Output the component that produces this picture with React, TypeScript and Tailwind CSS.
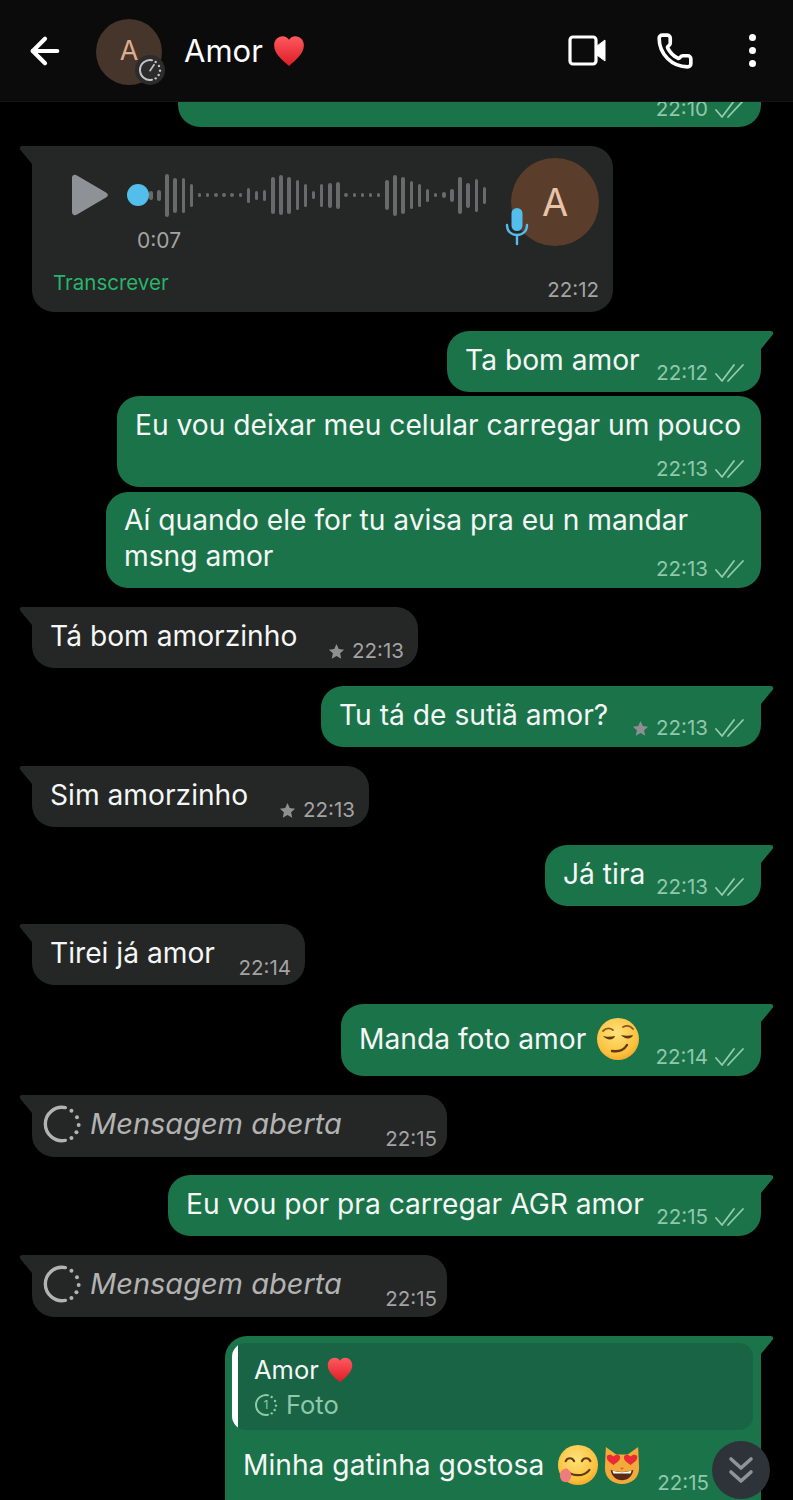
import type { ReactNode } from "react";
import { ArrowLeft, Phone } from "lucide-react";

const waveBars = [
  9, 11, 43, 35, 35, 23, 4, 4, 4, 4, 4, 4, 15, 9, 11, 37, 40, 37, 30, 23, 8, 23,
  25, 27, 4, 4, 4, 4, 4, 30, 41, 37, 28, 23, 13, 4, 6, 13, 37, 25, 33, 17,
];

function Heart({ size = 34 }: { size?: number }) {
  return (
    <svg width={size} height={size} viewBox="0 0 32 32">
      <defs>
        <linearGradient id="heart" x1="0" y1="0" x2="0" y2="1">
          <stop offset="0" stopColor="#ff5a5f" />
          <stop offset="1" stopColor="#dd1c26" />
        </linearGradient>
      </defs>
      <path
        d="M16 30C9 24 2 18 2 10.500C2 5.500 5.800 2 10 2c2.700 0 4.800 1.300 6 3.500C17.200 3.300 19.300 2 22 2c4.200 0 8 3.500 8 8.500C30 18 23 24 16 30Z"
        fill="url(#heart)"
      />
    </svg>
  );
}

function FaceBase({ id }: { id: string }) {
  return (
    <>
      <defs>
        <radialGradient id={id} cx="0.45" cy="0.35" r="0.75">
          <stop offset="0" stopColor="#ffe27a" />
          <stop offset="0.7" stopColor="#fbc03c" />
          <stop offset="1" stopColor="#ee9a1e" />
        </radialGradient>
      </defs>
      <circle cx="22" cy="22" r="21" fill={`url(#${id})`} />
    </>
  );
}

function Smirk() {
  return (
    <svg width="44" height="44" viewBox="0 0 44 44">
      <FaceBase id="smirk" />
      <path d="M7 14c3-3 7-3 10-1M27 10c4-2 8-1 10 2" stroke="#8a5a1c" strokeWidth="1.800" fill="none" strokeLinecap="round" />
      <path d="M7 19c3 1 8 1 12 0-1 4-8 5-12 0ZM25 18c4 1 8 1 12 0-1 4-8 5-12 0Z" fill="#5b3a14" />
      <path d="M16 34c6 1 12-1 15-6" stroke="#5b3a14" strokeWidth="2.400" fill="none" strokeLinecap="round" />
    </svg>
  );
}

function Yum() {
  return (
    <svg width="42" height="42" viewBox="0 0 44 44">
      <FaceBase id="yum" />
      <path d="M9 18c2-4 7-4 9 0M26 18c2-4 7-4 9 0" stroke="#5b3a14" strokeWidth="2.200" fill="none" strokeLinecap="round" />
      <path d="M10 27c4 7 18 8 24 0" stroke="#5b3a14" strokeWidth="2.200" fill="none" strokeLinecap="round" />
      <ellipse cx="9" cy="33" rx="6" ry="7" fill="#ef7c7c" />
    </svg>
  );
}

function CatEyes() {
  return (
    <svg width="38" height="42" viewBox="0 0 40 44">
      <path d="M3 3l11 8h12l11-8 1 22c0 11-8 17-18 17S2 36 2 25Z" fill="#f3aa3a" />
      <path d="M4 12c-2 2 4 3 5-1M36 12c2 2-4 3-5-1" fill="#d9882a" />
      <path d="M11 22c-4-3-7-5-7-8 0-3 4-4 7-1 3-3 7-2 7 1 0 3-3 5-7 8ZM29 22c-4-3-7-5-7-8 0-3 4-4 7-1 3-3 7-2 7 1 0 3-3 5-7 8Z" fill="#ea2b36" />
      <path d="M8 27c6 3 18 3 24 0-1 7-6 11-12 11S9 34 8 27Z" fill="#5a2a18" />
      <path d="M10 28c6 2 14 2 20 0l-1 3H11Z" fill="#fff" />
      <path d="M18 25h4l-2 2Z" fill="#c25a3a" />
    </svg>
  );
}

function Ticks() {
  return (
    <svg width="30" height="20" viewBox="0 0 30 20" className="text-[#93cbad]" fill="none" stroke="currentColor" strokeWidth="1.800" strokeLinecap="round" strokeLinejoin="round">
      <path d="M1 11l6 7L19 2" />
      <path d="M13 18L28 2" />
    </svg>
  );
}

function Star() {
  return (
    <svg width="17" height="17" viewBox="0 0 24 24" fill="currentColor" className="text-[#8f8f8f]">
      <path d="M12 1.500l3.200 7.100 7.600.800-5.700 5.100 1.600 7.600L12 18.300l-6.700 3.800 1.600-7.600L1.200 9.400l7.600-.800Z" />
    </svg>
  );
}

function Meta({ time, star, sent, hideTicks }: { time: string; star?: boolean; sent?: boolean; hideTicks?: boolean }) {
  return (
    <div className={`flex shrink-0 items-center gap-[7px] text-[20.500px] leading-[24px] ${sent ? "text-[#8fc8aa]" : "text-[#a3a3a3]"}`}>
      {star && <Star />}
      <span>{time}</span>
      {sent && !hideTicks && <Ticks />}
    </div>
  );
}

function Bubble({ side, tail, className, children }: { side: "in" | "out"; tail?: boolean; className: string; children: ReactNode }) {
  const isOut = side === "out";
  const corner = tail ? (isOut ? "rounded-tr-none" : "rounded-tl-none") : "";
  return (
    <div className={`relative shrink-0 rounded-[22px] ${corner} ${isOut ? "self-end bg-[#1b734a]" : "self-start bg-[#252626]"} ${className}`}>
      {tail && isOut && (
        <svg width="16" height="20" viewBox="0 0 16 20" className="absolute -right-[14px] top-0 text-[#1b734a]" fill="currentColor">
          <path d="M0 0h11.500c2.500 0 3.500 2 2 4L2 18v2H0Z" />
        </svg>
      )}
      {tail && !isOut && (
        <svg width="16" height="20" viewBox="0 0 16 20" className="absolute -left-[14px] top-0 text-[#252626]" fill="currentColor">
          <path d="M16 0H4.500C2 0 1 2 2.500 4L14 18v2h2Z" />
        </svg>
      )}
      {children}
    </div>
  );
}

function TimerRing({ size, className, children }: { size: number; className: string; children?: ReactNode }) {
  return (
    <svg width={size} height={size} viewBox="0 0 36 36" fill="none" stroke="currentColor" className={className} strokeLinecap="round">
      <path d="M21 3.300A15 15 0 1 0 21 32.700" strokeWidth="3" />
      <g fill="currentColor" stroke="none">
        <circle cx="26.500" cy="6" r="1.800" />
        <circle cx="31.500" cy="12" r="1.800" />
        <circle cx="33" cy="19" r="1.800" />
        <circle cx="31" cy="25.500" r="1.800" />
        <circle cx="26.500" cy="30.500" r="1.800" />
      </g>
      {children}
    </svg>
  );
}

function SimpleMessage({ side, text, time, star, className }: { side: "in" | "out"; text: string; time: string; star?: boolean; className: string }) {
  const isOut = side === "out";
  return (
    <Bubble side={side} tail className={`flex h-[61px] justify-between ${isOut ? "pl-[18px] pr-[16px]" : "pl-[18px] pr-[14px]"} ${className}`}>
      <p className="whitespace-nowrap pt-[10px] text-[28.200px] leading-[38px] text-[#f4f7f5]">{text}</p>
      <div className={`self-end ${isOut ? "pb-[7px]" : "pb-[5px]"}`}>
        <Meta time={time} star={star} sent={isOut} />
      </div>
    </Bubble>
  );
}

function OpenedMessage({ className }: { className: string }) {
  return (
    <Bubble side="in" tail className={`flex h-[62px] w-[415px] justify-between pl-[10px] pr-[10px] ${className}`}>
      <div className="flex items-center gap-[8px] pb-[4px] text-[#b3b3b3]">
        <TimerRing size={40} className="text-[#b3b3b3]" />
        <span className="whitespace-nowrap text-[29px] italic leading-[38px]">Mensagem aberta</span>
      </div>
      <div className="self-end pb-[6px]">
        <Meta time="22:15" />
      </div>
    </Bubble>
  );
}

function VoiceNote() {
  return (
    <Bubble side="in" tail className="mt-[19px] flex h-[166px] w-[581px] flex-col pl-[21px] pr-[14px] pt-[12px]">
      <div className="flex items-start">
        <svg width="38" height="42" viewBox="0 0 38 42" className="ml-[18px] mt-[16px] shrink-0 text-[#8e9296]" fill="currentColor">
          <path d="M1 4c0-3 2.500-4 5-2.500l29 17c2.500 1.500 2.500 3.500 0 5l-29 17C3.500 42 1 41 1 38Z" />
        </svg>
        <div className="ml-[18px] mt-[12px] flex flex-col">
          <div className="relative flex h-[50px] items-center pl-[22px]">
            <span className="absolute left-0 top-[14px] h-[22px] w-[22px] rounded-full bg-[#53bdeb]" />
            <div className="flex items-center gap-[4.650px]">
              {waveBars.map((h, i) => (
                <span key={i} className="w-[3.500px] rounded-full bg-[#686a6b]" style={{ height: h }} />
              ))}
            </div>
          </div>
          <span className="ml-[10px] mt-[7px] text-[21px] leading-[28px] text-[#a3a3a3]">0:07</span>
        </div>
        <div className="relative ml-auto flex h-[88px] w-[88px] shrink-0 items-center justify-center rounded-full bg-[#5a3e2b] text-[38px] text-[#e8c4a8]">
          A
          <svg width="26" height="40" viewBox="0 0 26 40" className="absolute -left-[7px] top-[48px] text-[#53bdeb]" fill="none" stroke="currentColor" strokeWidth="2.400" strokeLinecap="round">
            <rect x="7.500" y="2" width="11" height="23" rx="5.500" fill="currentColor" stroke="none" />
            <path d="M3 19c0 6 4 10 10 10s10-4 10-10M13 29v9" />
          </svg>
        </div>
      </div>
      <div className="mt-auto flex items-end justify-between pb-[10px]">
        <span className="mb-[5px] text-[20.500px] leading-[28px] text-[#27b56b]">Transcrever</span>
        <Meta time="22:12" />
      </div>
    </Bubble>
  );
}

export default function App() {
  return (
    <div className="relative flex h-[1500px] w-[793px] flex-col overflow-hidden bg-black font-[family-name:Inter,sans-serif]">
      {/* Header */}
      <header className="flex h-[102px] shrink-0 items-center border-b border-[#151515] bg-[#0b0b0b] pl-[24px] pr-[37px] text-white">
        <ArrowLeft size={42} strokeWidth={2.400} />
        <div className="relative ml-[30px] mt-[2px] flex h-[66px] w-[66px] shrink-0 items-center justify-center rounded-full bg-[#46352b] text-[27px] text-[#dcae8e]">
          A
          <div className="absolute -right-[3px] bottom-0 flex h-[30px] w-[30px] items-center justify-center rounded-full bg-[#2c2c2c]">
            <TimerRing size={24} className="text-[#c4c4c4]">
              <path d="M18 19L24 10" strokeWidth="2.500" />
            </TimerRing>
          </div>
        </div>
        <span className="ml-[22px] text-[31px] leading-none">Amor</span>
        <span className="ml-[9px] flex"><Heart /></span>
        <svg width="40" height="32" viewBox="0 0 40 32" className="ml-auto" fill="none" stroke="currentColor" strokeWidth="3.200" strokeLinejoin="round">
          <rect x="2" y="2" width="26" height="27" rx="3" />
          <path d="M29 11l8-6v21l-8-6Z" fill="currentColor" strokeWidth="1" />
        </svg>
        <Phone size={38} strokeWidth={2.300} className="ml-[48px]" />
        <div className="ml-[55px] flex flex-col gap-[6px]">
          <span className="h-[7px] w-[7px] rounded-full bg-white" />
          <span className="h-[7px] w-[7px] rounded-full bg-white" />
          <span className="h-[7px] w-[7px] rounded-full bg-white" />
        </div>
      </header>

      {/* Messages */}
      <main className="flex flex-col pl-[32px] pr-[32px]">
        <div className="flex h-[25px] w-[583px] justify-end self-end overflow-hidden rounded-b-[22px] bg-[#1b734a] pr-[16px]">
          <div className="-mt-[5px]">
            <Meta time="22:10" sent />
          </div>
        </div>

        <VoiceNote />

        <SimpleMessage side="out" text="Ta bom amor" time="22:12" className="mt-[19px] w-[314px]" />

        <Bubble side="out" className="mt-[4px] flex h-[91px] w-[644px] flex-col pl-[18px] pr-[16px]">
          <p className="whitespace-nowrap pt-[10px] text-[28.200px] leading-[38px] text-[#f4f7f5]">Eu vou deixar meu celular carregar um pouco</p>
          <div className="mt-auto self-end pb-[6px]">
            <Meta time="22:13" sent />
          </div>
        </Bubble>

        <Bubble side="out" className="mt-[5px] flex h-[96px] w-[655px] flex-col pl-[18px] pr-[16px] pt-[10px]">
          <p className="whitespace-nowrap text-[28.200px] leading-[36px] text-[#f4f7f5]">Aí quando ele for tu avisa pra eu n mandar</p>
          <div className="flex justify-between">
            <p className="text-[28.200px] leading-[36px] text-[#f4f7f5]">msng amor</p>
            <div className="pt-[19px]">
              <Meta time="22:13" sent />
            </div>
          </div>
        </Bubble>

        <SimpleMessage side="in" text="Tá bom amorzinho" time="22:13" star className="mt-[19px] w-[386px]" />
        <SimpleMessage side="out" text="Tu tá de sutiã amor?" time="22:13" star className="mt-[18px] w-[440px]" />
        <SimpleMessage side="in" text="Sim amorzinho" time="22:13" star className="mt-[19px] w-[337px]" />
        <SimpleMessage side="out" text="Já tira" time="22:13" className="mt-[18px] w-[216px]" />
        <SimpleMessage side="in" text="Tirei já amor" time="22:14" className="mt-[18px] w-[273px]" />

        <Bubble side="out" tail className="mt-[19px] flex h-[72px] w-[420px] justify-between pl-[18px] pr-[16px]">
          <div className="flex items-center gap-[10px] pb-[2px]">
            <span className="whitespace-nowrap text-[28.200px] leading-[38px] text-[#f4f7f5]">Manda foto amor</span>
            <Smirk />
          </div>
          <div className="self-end pb-[7px]">
            <Meta time="22:14" sent />
          </div>
        </Bubble>

        <OpenedMessage className="mt-[19px]" />
        <SimpleMessage side="out" text="Eu vou por pra carregar AGR amor" time="22:15" className="mt-[18px] w-[593px]" />
        <OpenedMessage className="mt-[19px]" />

        <Bubble side="out" tail className="mt-[19px] flex h-[190px] w-[536px] flex-col px-[7px] pt-[7px]">
          <div className="flex h-[87px] w-[521px] overflow-hidden rounded-[14px] bg-[#186444]">
            <span className="w-[6px] shrink-0 bg-white" />
            <div className="pl-[16px] pt-[9px]">
              <div className="flex items-center gap-[7px] text-[25.500px] leading-[36px] text-[#f4f7f5]">
                Amor <Heart size={28} />
              </div>
              <div className="flex items-center gap-[8px] text-[25.500px] leading-[34px] text-[#8fc8aa]">
                <TimerRing size={24} className="text-[#8fc8aa]">
                  <text x="18" y="24" textAnchor="middle" fontSize="18" fill="currentColor" stroke="none">1</text>
                </TimerRing>
                Foto
              </div>
            </div>
          </div>
          <div className="flex items-center pl-[11px] pt-[14px]">
            <span className="whitespace-nowrap text-[28.200px] leading-[38px] text-[#f4f7f5]">Minha gatinha gostosa</span>
            <span className="ml-[13px] flex"><Yum /></span>
            <span className="ml-[4px] flex"><CatEyes /></span>
            <div className="-mb-[11px] ml-[16px] mt-[25px]">
              <Meta time="22:15" sent hideTicks />
            </div>
          </div>
        </Bubble>
      </main>

      {/* Scroll to bottom */}
      <button type="button" aria-label="Ir para o fim" className="absolute bottom-[1px] left-[712px] flex h-[58px] w-[58px] items-center justify-center rounded-full bg-[#2d3338]">
        <svg width="26" height="28" viewBox="0 0 26 28" fill="none" stroke="#8e9499" strokeWidth="3.600" strokeLinecap="round" strokeLinejoin="round">
          <path d="M3 3l10 9 10-9M3 16l10 9 10-9" />
        </svg>
      </button>
    </div>
  );
}
